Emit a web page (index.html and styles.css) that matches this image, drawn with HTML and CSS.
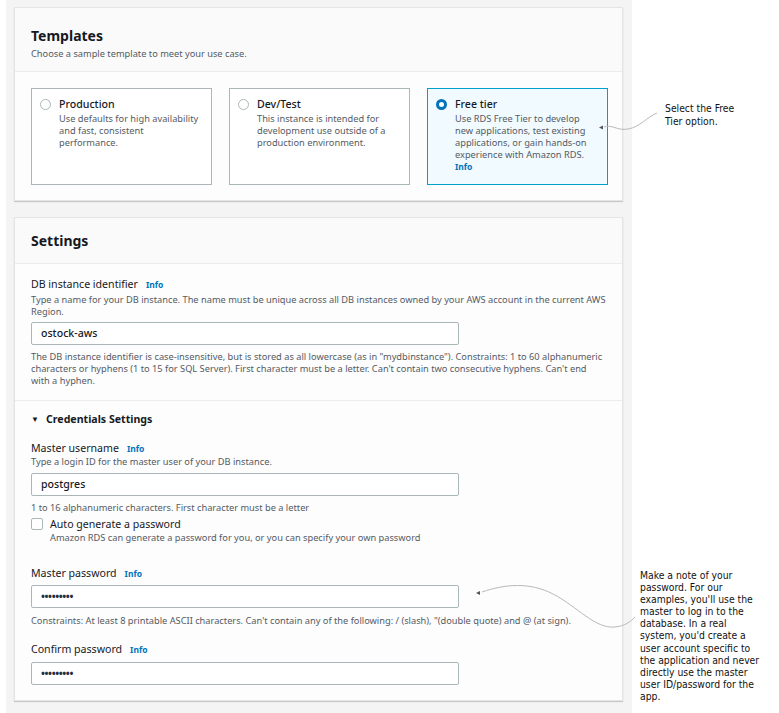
FILE: index.html
```html
<!DOCTYPE html>
<html lang="en">
<head>
<meta charset="utf-8">
<title>Create database – Templates and Settings</title>
<link rel="stylesheet" href="styles.css">
</head>
<body>
<div class="page">
  <div class="console">
    <section class="panel">
      <header class="panel-header">
        <h2 class="panel-title">Templates</h2>
        <p class="panel-sub">Choose a sample template to meet your use case.</p>
      </header>
      <div class="panel-body cards">
        <div class="card">
          <span class="radio"></span>
          <div class="card-text">
            <div class="card-title">Production</div>
            <div class="card-desc">Use defaults for high availability and fast, consistent performance.</div>
          </div>
        </div>
        <div class="card">
          <span class="radio"></span>
          <div class="card-text">
            <div class="card-title">Dev/Test</div>
            <div class="card-desc">This instance is intended for development use outside of a production environment.</div>
          </div>
        </div>
        <div class="card card-selected">
          <span class="radio radio-on"></span>
          <div class="card-text">
            <div class="card-title">Free tier</div>
            <div class="card-desc">Use RDS Free Tier to develop new applications, test existing applications, or gain hands-on experience with Amazon RDS. <span class="info info-block">Info</span></div>
          </div>
        </div>
      </div>
    </section>

    <section class="panel panel-settings">
      <header class="panel-header panel-header-plain">
        <h2 class="panel-title">Settings</h2>
      </header>
      <div class="panel-body settings-top">
        <div class="label-row"><span class="label">DB instance identifier</span><span class="info">Info</span></div>
        <div class="desc desc-first">Type a name for your DB instance. The name must be unique across all DB instances owned by your AWS account in the current AWS Region.</div>
        <div class="input input-first">ostock-aws</div>
        <div class="help help-first">The DB instance identifier is case-insensitive, but is stored as all lowercase (as in "mydbinstance"). Constraints: 1 to 60 alphanumeric characters or hyphens (1 to 15 for SQL Server). First character must be a letter. Can't contain two consecutive hyphens. Can't end with a hyphen.</div>
      </div>
      <div class="panel-body credentials">
        <div class="expander"><span class="caret">▼</span>Credentials Settings</div>

        <div class="label-row field-user"><span class="label">Master username</span><span class="info">Info</span></div>
        <div class="desc">Type a login ID for the master user of your DB instance.</div>
        <div class="input input-user">postgres</div>
        <div class="help help-user">1 to 16 alphanumeric characters. First character must be a letter</div>

        <div class="check-row">
          <span class="checkbox"></span>
          <div>
            <div class="check-label">Auto generate a password</div>
            <div class="desc">Amazon RDS can generate a password for you, or you can specify your own password</div>
          </div>
        </div>

        <div class="label-row field-pass"><span class="label">Master password</span><span class="info">Info</span></div>
        <div class="input input-pass"><span class="dots">•••••••••</span></div>
        <div class="help help-pass">Constraints: At least 8 printable ASCII characters. Can't contain any of the following: / (slash), "(double quote) and @ (at sign).</div>

        <div class="label-row field-confirm"><span class="label">Confirm password</span><span class="info">Info</span></div>
        <div class="input input-confirm"><span class="dots">•••••••••</span></div>
      </div>
    </section>
  </div>

  <p class="note note-tier">Select the Free<br>Tier option.</p>
  <p class="note note-pass">Make a note of your<br>password. For our<br>examples, you'll use the<br>master to log in to the<br>database. In a real<br>system, you'd create a<br>user account specific to<br>the application and never<br>directly use the master<br>user ID/password for the<br>app.</p>

  <svg class="connectors" width="779" height="713" viewBox="0 0 779 713" aria-hidden="true">
    <path class="wire" d="M604,127 C612,124 617,131 628,129 C640,127 647,117 657,113"/>
    <path class="tip" d="M599,127.5 L603,125.5 L603,129.5 Z"/>
    <path class="wire" d="M482,592 C505,584 530,582 553,594 C578,607 595,629 615,627 C625,626 630,622 635,617"/>
    <path class="tip" d="M476,593 L480,591 L480,595 Z"/>
  </svg>
</div>
</body>
</html>
```

FILE: styles.css
```css
* { box-sizing: border-box; }

html, body {
  margin: 0;
  padding: 0;
  background: #ffffff;
}

body {
  font-family: "Noto Sans", "Open Sans", Arial, sans-serif;
  color: #16191f;
}

.page {
  position: relative;
  width: 779px;
  height: 713px;
  overflow: hidden;
}

.console {
  width: 626px;
  margin-left: 6px;
  height: 713px;
  background: #f4f4f4;
  padding: 7px 8px 0 8px;
  display: flex;
  flex-direction: column;
  gap: 16px;
}

.panel {
  width: 609px;
  background: #fdfdfd;
  border: 1px solid #e4e4e4;
  box-shadow: 0 1px 1px rgba(0, 0, 0, 0.18);
}

.panel-header {
  background: #fafafa;
  border-bottom: 1px solid #eaeded;
  padding: 18px 16px 10px 16px;
}

.panel-header-plain {
  padding: 13px 16px 12px 16px;
}

.panel-title {
  margin: 0;
  font-size: 14px;
  line-height: 20px;
  height: 20px;
  font-weight: 700;
}

.panel-sub {
  margin: 1px 0 0 0;
  font-size: 9.25px;
  line-height: 14px;
  height: 14px;
  color: #545b64;
}

.panel-body {
  padding: 16px 16px 15px 16px;
}

/* template cards */
.cards {
  display: flex;
  gap: 17px;
}

.card {
  width: 181px;
  height: 97px;
  border: 1px solid #aab7b8;
  background: #ffffff;
  padding: 7px 8px 0 8px;
  display: flex;
  gap: 8px;
}

.card-text {
  flex: none;
  width: 145px;
}

.card-selected {
  border-color: #00a1c9;
  background: #f1faff;
}

.radio {
  flex: none;
  width: 11px;
  height: 11px;
  margin-top: 3px;
  border: 1px solid #aab7b8;
  border-radius: 50%;
  background: #fff;
}

.radio-on {
  border: 3.5px solid #0073bb;
}

.card-title {
  font-size: 10.6px;
  line-height: 16px;
  height: 16px;
  font-weight: 500;
}

.card-desc {
  margin-top: 1px;
  font-size: 9.25px;
  line-height: 12px;
  color: #545b64;
}

.info {
  margin-left: 8px;
  font-size: 8.5px;
  font-weight: 700;
  color: #0073bb;
}

.info-block {
  display: block;
  margin-left: 0;
}

/* settings */
.settings-top {
  padding: 12px 16px 13px 16px;
  border-bottom: 1px solid #eaeded;
}

.label-row {
  height: 16px;
  line-height: 16px;
  display: flex;
  align-items: baseline;
}

.label {
  font-size: 10.6px;
}

.desc {
  font-size: 9.25px;
  line-height: 12px;
  color: #545b64;
}

.desc-first {
  margin-top: 2px;
}

.input {
  width: 428px;
  height: 23px;
  border: 1px solid #aab7b8;
  border-radius: 2px;
  background: #fff;
  padding: 0 9px;
  font-size: 10.6px;
  line-height: 21px;
  font-weight: 500;
}

.dots {
  font-size: 10.5px;
  letter-spacing: -0.4px;
  font-weight: 700;
  color: #232f3e;
}

.input-first { margin-top: 4px; }

.help {
  font-size: 9.25px;
  line-height: 12px;
  color: #545b64;
}

.help-first { margin-top: 6px; }

.credentials {
  padding: 10px 16px 15px 16px;
}

.expander {
  height: 16px;
  font-size: 10.6px;
  line-height: 16px;
  font-weight: 700;
  color: #16191f;
  display: flex;
  align-items: center;
}

.caret {
  font-size: 8px;
  width: 15px;
  color: #16191f;
}

.field-user { margin-top: 13px; }
.input-user { margin-top: 5px; }
.help-user { margin-top: 6px; }

.check-row {
  margin-top: 2px;
  display: flex;
  gap: 7px;
}

.checkbox {
  flex: none;
  width: 12px;
  height: 12px;
  margin-top: 2px;
  border: 1px solid #aab7b8;
  border-radius: 2px;
  background: #fff;
}

.check-label {
  height: 16px;
  font-size: 10.6px;
  line-height: 16px;
}

.field-pass { margin-top: 21px; }
.input-pass { margin-top: 4px; }
.help-pass { margin-top: 7px; }

.field-confirm { margin-top: 14px; }
.input-confirm { margin-top: 5px; }

/* annotations */
.note {
  position: absolute;
  margin: 0;
  font-family: "DejaVu Sans Condensed", "DejaVu Sans", sans-serif;
  font-size: 10.3px;
  color: #111;
  white-space: nowrap;
}

.note-tier {
  left: 665px;
  top: 102px;
  line-height: 13px;
}

.note-pass {
  left: 640px;
  top: 569px;
  line-height: 12.1px;
}

.connectors {
  position: absolute;
  left: 0;
  top: 0;
  pointer-events: none;
}

.wire {
  fill: none;
  stroke: #b9b9b9;
  stroke-width: 1;
}

.tip {
  fill: #555;
}
```
